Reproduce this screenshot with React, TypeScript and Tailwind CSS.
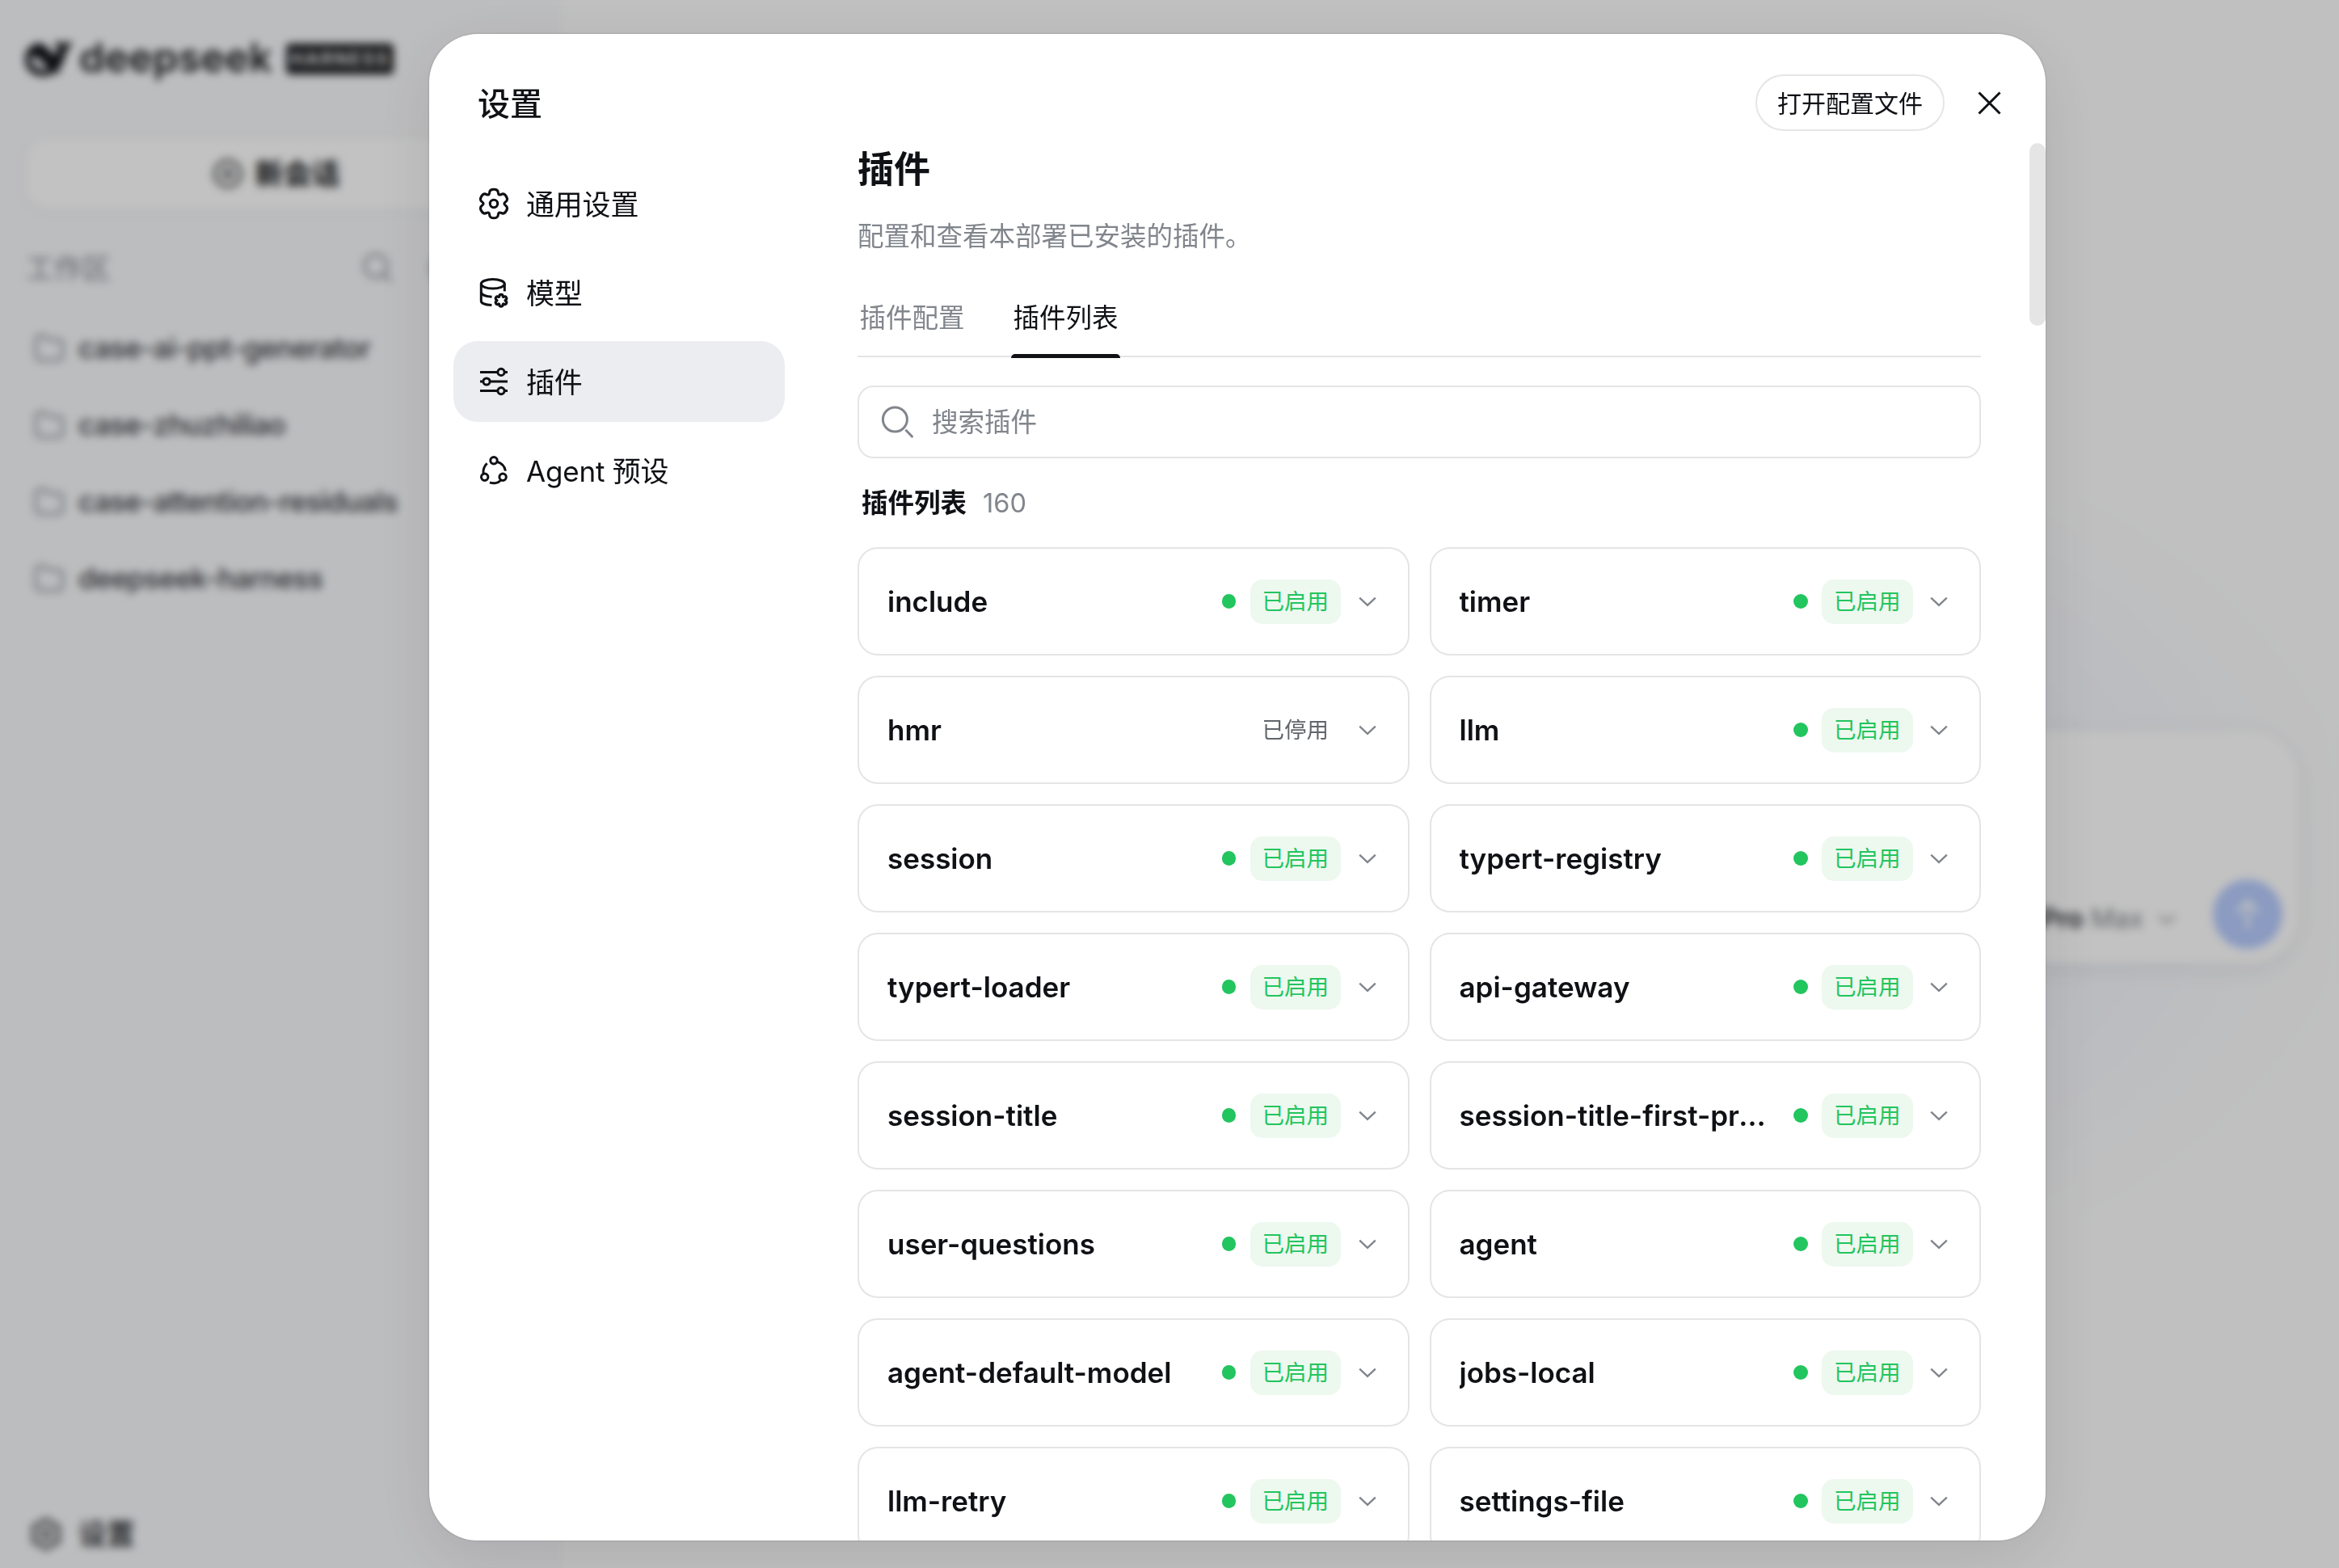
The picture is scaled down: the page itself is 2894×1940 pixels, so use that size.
import type { ReactNode } from "react";

/** Closed six-lobed outline, smoothed with quadratic segments between control points. */
function gearPath(cx: number, cy: number, outer: number, inner: number) {
  const pts: [number, number][] = [];
  for (let k = 0; k < 6; k++) {
    const base = -90 + k * 60;
    for (const [offset, r] of [
      [-16, outer],
      [16, outer],
      [30, inner],
    ]) {
      const a = ((base + offset) * Math.PI) / 180;
      pts.push([cx + r * Math.cos(a), cy + r * Math.sin(a)]);
    }
  }
  const mid = (a: [number, number], b: [number, number]) =>
    `${((a[0] + b[0]) / 2).toFixed(2)} ${((a[1] + b[1]) / 2).toFixed(2)}`;
  let d = `M${mid(pts[pts.length - 1], pts[0])}`;
  pts.forEach((p, i) => {
    d += `Q${p[0].toFixed(2)} ${p[1].toFixed(2)} ${mid(p, pts[(i + 1) % pts.length])}`;
  });
  return d + "Z";
}

const MAIN_GEAR = gearPath(20, 20, 18.5, 11.2);
const SMALL_GEAR = gearPath(29, 29.7, 7.7, 4.2);

function Icon({ children, className, width = 3 }: { children: ReactNode; className?: string; width?: number }) {
  return (
    <svg
      viewBox="0 0 40 40"
      fill="none"
      stroke="currentColor"
      strokeWidth={width}
      className={`size-10 shrink-0 ${className ?? ""}`}
    >
      {children}
    </svg>
  );
}

const GearIcon = () => (
  <Icon width={3.1}>
    <path d={MAIN_GEAR} />
    <circle cx="20" cy="20" r="4.7" />
  </Icon>
);

const ModelIcon = () => (
  <Icon>
    <ellipse cx="18.8" cy="9.3" rx="14.5" ry="5.7" />
    <path d="M4.3 9.3V30.5C4.3 33 9.5 35.2 17.4 35.6" />
    <path d="M4.3 19.8C4.8 22.6 10 24.9 17.6 25.2" />
    <path d="M33.3 9.3V18.4" />
    <path d={SMALL_GEAR} strokeWidth={3.2} />
  </Icon>
);

const PluginIcon = () => (
  <Icon>
    <path d="M3 8.4H24.8M33.2 8.4H37M3 20H6.8M15.2 20H37M3 31.6H24.8M33.2 31.6H37" />
    <circle cx="29" cy="8.4" r="4.1" />
    <circle cx="11" cy="20" r="4.1" />
    <circle cx="29" cy="31.6" r="4.1" />
  </Icon>
);

const AgentIcon = () => (
  <Icon>
    <circle cx="20" cy="7.8" r="4.2" />
    <circle cx="8.7" cy="28.3" r="4.2" />
    <circle cx="31.1" cy="28.3" r="4.2" />
    <path d="M7 24.2C6.5 19 8.2 14.6 11.6 11.2" />
    <path d="M23.8 9.2C29.8 11 33.6 15.2 34.4 20.6" />
    <path d="M15 34.9C19.8 36.6 25.4 35.6 28.8 31.9" />
  </Icon>
);

const SearchIcon = () => (
  <Icon>
    <circle cx="17.4" cy="17" r="15" />
    <path d="M30.4 29.8L39.4 39" />
  </Icon>
);

const FolderIcon = () => (
  <Icon>
    <path d="M3.5 9a4.5 4.5 0 0 1 4.5-4.5h6.5l4.5 5h13a4.500 4.500 0 0 1 4.500 4.500v16a4.500 4.500 0 0 1-4.500 4.500H8a4.500 4.500 0 0 1-4.500-4.500z" />
  </Icon>
);

const Whale = () => (
  <svg viewBox="0 0 60 46" className="h-[46px] w-[60px] shrink-0" fill="currentColor">
    <path d="M59 1c-5 2-9 1-12 4-2-2-5-4-8-5 0 4 0 7 3 10-2 5-3 7-5 9C33 14 29 8 21 4c-2-1-4-1-6 0C6 7 1 14 1 23c0 13 10 21 22 21 8 0 12-2 15-5 3 2 6 1 8 0-1-1-3-2-4-4 6-6 8-12 9-20 3-3 6-7 8-14zM30 37C20 38 8 33 7 20c8-1 16 4 23 17z" />
  </svg>
);

const folders = ["case-ai-ppt-generator", "case-zhuzhiliao", "case-attention-residuals", "deepseek-harness"];

function Sidebar() {
  return (
    <aside className="flex w-[697px] shrink-0 flex-col bg-[#f8f9fb]">
      <div className="mt-[50px] flex h-[46px] items-center pl-[30px]">
        <Whale />
        <span className="ml-2 w-[242px] text-[50px] leading-[46px] font-semibold tracking-[0.3px] text-[#17181b]">
          <span className="relative -top-[2px]">deepseek</span>
        </span>
        <span className="ml-[14px] flex h-[38px] w-[133px] items-center justify-center rounded-[5px] bg-[#1b1c1f] text-[23px] font-semibold tracking-[1.800px] text-white">
          HARNESS
        </span>
      </div>
      <div className="mx-[32px] mt-[75px] flex h-[88px] items-center justify-center gap-[13px] rounded-[28px] bg-white shadow-[0_2px_14px_rgba(0,0,0,0.06)]">
        <Icon>
          <circle cx="20" cy="20" r="16" />
          <path d="M20 12.500v15M12.500 20h15" />
        </Icon>
        <span className="mr-[14px] text-[35px] leading-[50px] font-semibold">新会话</span>
      </div>
      <div className="mt-[48px] flex h-[50px] items-center pl-[32px] text-[#81858c]">
        <span className="text-[35px]">工作区</span>
        <Icon className="ml-[310px]">
          <circle cx="18" cy="17" r="14" />
          <path d="M28 27.500L37 36.500" />
        </Icon>
        <Icon className="ml-[43px]">
          <circle cx="20" cy="20" r="16" />
        </Icon>
      </div>
      <div className="mt-[26px] flex flex-col">
        {folders.map((name) => (
          <div key={name} className="flex h-[95px] items-center pl-[41px]">
            <span className="text-[#81858c]">
              <FolderIcon />
            </span>
            <span className="ml-[16px] text-[35px] font-medium tracking-[-0.650px] text-[#34363b]">{name}</span>
          </div>
        ))}
      </div>
      <div className="mt-auto mb-[17px] flex h-[50px] items-center gap-[20px] pl-[37px]">
        <GearIcon />
        <span className="text-[35px] font-medium">设置</span>
      </div>
    </aside>
  );
}

function Workspace() {
  return (
    <main className="flex flex-1 flex-col bg-white bg-[radial-gradient(1150px_640px_at_50%_1060px,#eaf0fd_0%,#f2f5fc_60%,#fdfdfd_100%)] pt-[904px] pr-[50px] pl-[160px]">
      <div className="flex h-[288px] items-end justify-end rounded-[60px] bg-white pr-[20px] pb-[18px] shadow-[0_6px_30px_rgba(0,0,0,0.08)]">
        <div className="mb-[12px] flex items-center text-[32.500px] leading-[50px]">
          <span className="font-semibold text-[#2b2d31]">Pro</span>
          <span className="ml-[9px] text-[#81858c]">Max</span>
          <Chevron className="ml-[14px] text-[#81858c]" />
        </div>
        <div className="ml-[42px] flex size-[86px] items-center justify-center rounded-full bg-[#b7ccfe] text-white">
          <Icon width={4}>
            <path d="M20 38V4M6 18L20 4l14 14" />
          </Icon>
        </div>
      </div>
    </main>
  );
}

function Chevron({ className }: { className?: string }) {
  return (
    <svg viewBox="0 0 30 30" fill="none" stroke="currentColor" strokeWidth="2.400" className={`size-[30px] shrink-0 ${className ?? ""}`}>
      <path d="M5.200 10.700L15 19.800l9.800-9.100" />
    </svg>
  );
}

const nav = [
  { label: "通用设置", icon: <GearIcon />, active: false },
  { label: "模型", icon: <ModelIcon />, active: false },
  { label: "插件", icon: <PluginIcon />, active: true },
  { label: "Agent 预设", icon: <AgentIcon />, active: false },
];

const plugins = [
  { name: "include", enabled: true },
  { name: "timer", enabled: true },
  { name: "hmr", enabled: false },
  { name: "llm", enabled: true },
  { name: "session", enabled: true },
  { name: "typert-registry", enabled: true },
  { name: "typert-loader", enabled: true },
  { name: "api-gateway", enabled: true },
  { name: "session-title", enabled: true },
  { name: "session-title-first-prompt", enabled: true },
  { name: "user-questions", enabled: true },
  { name: "agent", enabled: true },
  { name: "agent-default-model", enabled: true },
  { name: "jobs-local", enabled: true },
  { name: "llm-retry", enabled: true },
  { name: "settings-file", enabled: true },
];

function PluginCard({ name, enabled }: { name: string; enabled: boolean }) {
  return (
    <div className="flex h-[134px] items-center gap-[17.500px] rounded-[25px] border-2 border-[#e5e5e5] px-[35px]">
      <span className="min-w-0 flex-1 truncate text-[35px] leading-[50px] font-semibold">{name}</span>
      {enabled && <span className="size-[17.500px] shrink-0 rounded-full bg-[#22c55e]" />}
      <span
        className={
          enabled
            ? "flex h-[55px] shrink-0 items-center rounded-[15px] bg-[#edf8ef] px-[15px] pt-[2px] text-[27.500px] text-[#22c55e]"
            : "flex h-[55px] shrink-0 items-center rounded-[15px] px-[15px] pt-[2px] text-[27.500px] text-[#61666b]"
        }
      >
        {enabled ? "已启用" : "已停用"}
      </span>
      <Chevron className="text-[#81858c]" />
    </div>
  );
}

function SettingsDialog() {
  return (
    <section className="flex h-[1864px] w-[2000px] flex-col overflow-hidden rounded-[60px] bg-white shadow-[0_20px_80px_rgba(0,0,0,0.1),0_0_2px_1px_rgba(0,0,0,0.12)]">
      <header className="flex h-[135px] shrink-0 items-center pt-[35px] pr-[35px] pl-[60px]">
        <h1 className="mt-[3px] flex-1 text-[40px] leading-[60px] font-medium">设置</h1>
        <button className="flex h-[70px] items-center rounded-full border-2 border-[#e5e5e5] px-[25px] pt-[3px] text-[30px]">
          打开配置文件
        </button>
        <button className="ml-5 flex size-[70px] items-center justify-center">
          <Icon>
            <path d="M7.500 7.500l26 26M33.500 7.500l-26 26" />
          </Icon>
        </button>
      </header>
      <div className="flex min-h-0 flex-1">
        <nav className="flex w-[440px] shrink-0 flex-col gap-2.5 pt-[25px] pl-[30px]">
          {nav.map((item) => (
            <div
              key={item.label}
              className={
                item.active
                  ? "flex h-[100px] items-center gap-5 rounded-[30px] bg-[#ecedf1] px-[30px]"
                  : "flex h-[100px] items-center gap-5 rounded-[30px] px-[30px]"
              }
            >
              {item.icon}
              <span className="mt-[2px] text-[35px] leading-[50px] tracking-[-0.200px]">{item.label}</span>
            </div>
          ))}
        </nav>
        <div className="flex min-w-0 flex-1 flex-col overflow-hidden pl-[90px]">
          <h2 className="mt-px shrink-0 text-[45px] leading-[64px] font-semibold">插件</h2>
          <p className="mt-[28px] shrink-0 text-[32.500px] leading-[46px] text-[#81858c]">
            配置和查看本部署已安装的插件。
          </p>
          <div className="mt-[55px] flex h-[71px] w-[1390px] shrink-0 gap-[55px] border-b-2 border-[#e5e5e5] text-[32.500px] leading-[46px]">
            <span className="px-[2.500px] text-[#81858c]">插件配置</span>
            <span className="relative px-[2.500px]">
              插件列表
              <span className="absolute inset-x-0 -bottom-[3px] h-[5px] rounded-t-[5px] bg-[#0f1115]" />
            </span>
          </div>
          <div className="mt-[35px] flex h-[90px] w-[1390px] shrink-0 items-center rounded-[20px] border-2 border-[#e5e5e5] pl-[27px] text-[#81858c]">
            <SearchIcon />
            <span className="mt-[3px] ml-[23px] text-[32.500px]">搜索插件</span>
          </div>
          <div className="mt-[33px] flex h-[46px] shrink-0 items-center gap-5 pl-[5px] leading-[46px]">
            <span className="text-[32.500px] font-semibold">插件列表</span>
            <span className="text-[32.500px] text-[#81858c]">160</span>
          </div>
          <div className="mt-[31px] grid w-[1390px] shrink-0 grid-cols-2 gap-[25px]">
            {plugins.map((p) => (
              <PluginCard key={p.name} {...p} />
            ))}
          </div>
        </div>
        <div className="h-[226px] w-5 shrink-0 rounded-full bg-[#e5e5e5]" />
      </div>
    </section>
  );
}

export default function App() {
  return (
    <div className="relative h-[1940px] w-[2894px] overflow-hidden bg-white font-['Inter','Noto_Sans_CJK_SC',sans-serif] text-[#0f1115]">
      <div className="flex h-full">
        <Sidebar />
        <Workspace />
      </div>
      <div className="absolute inset-0 bg-black/24 pt-[42px] pl-[531px] backdrop-blur-[5.500px]">
        <SettingsDialog />
      </div>
    </div>
  );
}
